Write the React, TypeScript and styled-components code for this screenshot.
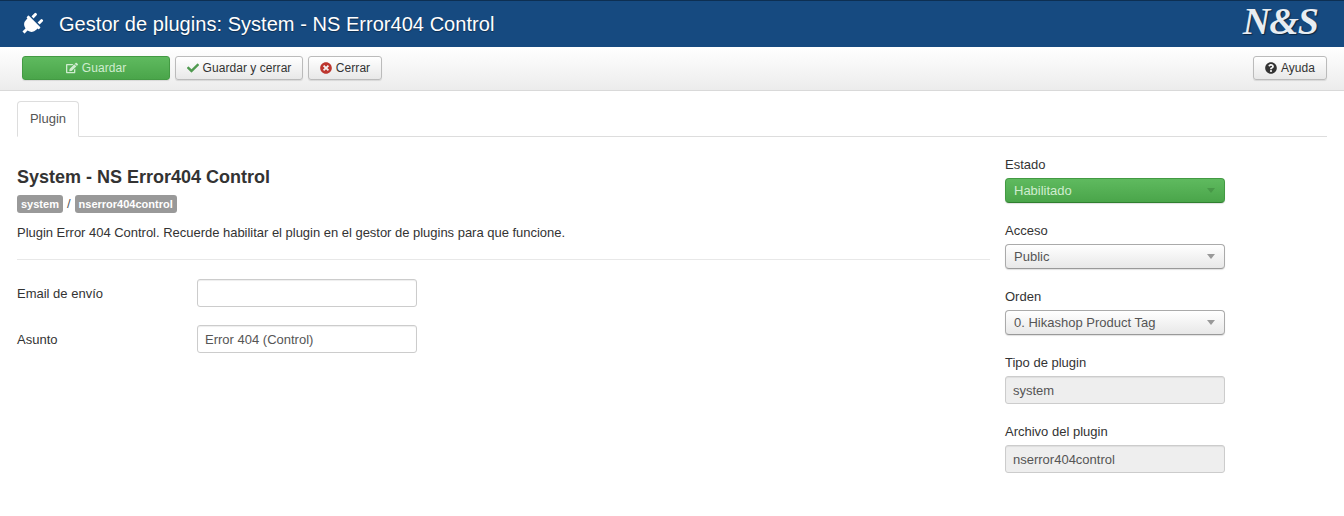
import { createGlobalStyle } from "styled-components";
import styled from "styled-components";
import { FaCheck, FaEdit, FaPlug, FaQuestionCircle, FaTimesCircle } from "react-icons/fa";

const GlobalStyle = createGlobalStyle`
  html, body {
    margin: 0;
    padding: 0;
    background: #fff;
    color: #333;
    font-family: "Liberation Sans", Arial, sans-serif;
    font-size: 13px;
    line-height: 18px;
  }
  * {
    box-sizing: border-box;
  }
`;

const Header = styled.header`
  height: 47px;
  display: flex;
  align-items: center;
  justify-content: space-between;
  padding: 0 26px 0 20px;
  background: #164a80;
  border-top: 1px solid #0d2f52;
`;

const HeaderTitle = styled.h1`
  display: flex;
  align-items: center;
  gap: 16px;
  margin: 0;
  color: #fff;
  font-size: 20px;
  font-weight: 400;
  line-height: 24px;
  letter-spacing: 0.04px;
  text-shadow: 0 1px 1px rgba(0, 0, 0, 0.4);

  svg {
    width: 23px;
    height: 23px;
    transform: rotate(45deg);
  }
`;

const Logo = styled.div`
  margin-bottom: 7px;
  color: #e8edf2;
  font-family: "Liberation Serif", "Times New Roman", serif;
  font-size: 38px;
  font-style: italic;
  font-weight: 700;
  line-height: 38px;
  letter-spacing: -1px;
  text-shadow: 1px 1px 1px rgba(0, 0, 0, 0.5);
`;

const Toolbar = styled.div`
  height: 44px;
  display: flex;
  align-items: center;
  gap: 5px;
  padding: 0 17px 2px 22px;
  background: linear-gradient(#fff, #ececec);
  border-bottom: 1px solid #d9d9d9;
`;

const Button = styled.button<{ $primary?: boolean; $push?: boolean; $width: number }>`
  width: ${(p) => p.$width}px;
  height: 24px;
  display: flex;
  align-items: center;
  justify-content: center;
  gap: 4px;
  margin-left: ${(p) => (p.$push ? "auto" : "0")};
  padding: 0;
  font: inherit;
  font-size: 12px;
  letter-spacing: 0.05px;
  color: ${(p) => (p.$primary ? "#cfeccf" : "#333")};
  background: ${(p) =>
    p.$primary
      ? "linear-gradient(#5fba5f, #4aa54a)"
      : "linear-gradient(#fff, #e8e8e8)"};
  border: 1px solid ${(p) => (p.$primary ? "#439a43" : "#bbb")};
  border-radius: 3px;
  box-shadow: 0 1px 1px rgba(0, 0, 0, 0.1);

  svg {
    width: 12px;
    height: 12px;
  }
`;

const Page = styled.main`
  padding: 10px 17px 0;
`;

const Tabs = styled.div`
  height: 36px;
  border-bottom: 1px solid #ddd;
`;

const Tab = styled.div`
  width: 62px;
  height: 36px;
  display: flex;
  align-items: center;
  justify-content: center;
  color: #555;
  background: #fff;
  border: 1px solid #ddd;
  border-bottom-color: #fff;
  border-radius: 4px 4px 0 0;
`;

const Columns = styled.div`
  display: grid;
  grid-template-columns: 973px 220px;
  column-gap: 15px;
  padding-top: 19px;
`;

const PluginName = styled.h2`
  margin: 10px 0 7px;
  color: #333;
  font-size: 18px;
  font-weight: 700;
  line-height: 22px;
`;

const Path = styled.div`
  display: flex;
  align-items: center;
  gap: 4px;
  height: 18px;
  color: #555;
`;

const Badge = styled.span`
  height: 18px;
  padding: 0 4px;
  color: #fff;
  background: #999;
  border-radius: 3px;
  font-size: 11px;
  font-weight: 700;
  line-height: 18px;
`;

const Description = styled.p`
  margin: 11px 0 17px;
  letter-spacing: -0.02px;
`;

const Divider = styled.hr`
  height: 1px;
  margin: 0 0 19px;
  background: #e8e8e8;
  border: 0;
`;

const FormRow = styled.div`
  display: flex;
  align-items: center;
  height: 28px;
  margin-bottom: 18px;
`;

const RowLabel = styled.label`
  width: 180px;
  padding-top: 2px;
`;

const Input = styled.input`
  width: 220px;
  height: 28px;
  padding: 0 7px;
  font: inherit;
  color: #555;
  background: ${(p) => (p.disabled ? "#eee" : "#fff")};
  border: 1px solid #ccc;
  border-radius: 3px;
  box-shadow: inset 0 1px 1px rgba(0, 0, 0, 0.07);
`;

const Side = styled.aside`
  display: flex;
  flex-direction: column;
`;

const Field = styled.div<{ $gap: number }>`
  display: flex;
  flex-direction: column;
  gap: 4px;
  margin-bottom: ${(p) => p.$gap}px;
`;

const Select = styled.div<{ $success?: boolean }>`
  height: 25px;
  display: flex;
  align-items: center;
  justify-content: space-between;
  padding: 0 9px 0 8px;
  color: ${(p) => (p.$success ? "#cfeccf" : "#555")};
  background: ${(p) =>
    p.$success
      ? "linear-gradient(#5fba5f, #4aa54a)"
      : "linear-gradient(#fff, #e8e8e8)"};
  border: 1px solid ${(p) => (p.$success ? "#439a43" : "#aaa")};
  border-bottom-color: ${(p) => (p.$success ? "#2f7f2f" : "#999")};
  border-radius: 4px;
  box-shadow: 0 1px 1px rgba(0, 0, 0, 0.12);
`;

const Caret = styled.span<{ $success?: boolean }>`
  width: 0;
  height: 0;
  border-left: 4px solid transparent;
  border-right: 4px solid transparent;
  border-top: 5px solid ${(p) => (p.$success ? "#489848" : "#999")};
`;

const selects = [
  { label: "Estado", value: "Habilitado", success: true },
  { label: "Acceso", value: "Public" },
  { label: "Orden", value: "0. Hikashop Product Tag" },
];

const App = () => {
  return (
    <>
      <GlobalStyle />
      <Header>
        <HeaderTitle>
          <FaPlug />
          Gestor de plugins: System - NS Error404 Control
        </HeaderTitle>
        <Logo>N&amp;S</Logo>
      </Header>
      <Toolbar>
        <Button $primary $width={148}>
          <FaEdit />
          Guardar
        </Button>
        <Button $width={128}>
          <FaCheck color="#4f9a4f" />
          Guardar y cerrar
        </Button>
        <Button $width={74}>
          <FaTimesCircle color="#bd362f" />
          Cerrar
        </Button>
        <Button $push $width={74}>
          <FaQuestionCircle />
          Ayuda
        </Button>
      </Toolbar>
      <Page>
        <Tabs>
          <Tab>Plugin</Tab>
        </Tabs>
        <Columns>
          <section>
            <PluginName>System - NS Error404 Control</PluginName>
            <Path>
              <Badge>system</Badge>/<Badge>nserror404control</Badge>
            </Path>
            <Description>
              Plugin Error 404 Control. Recuerde habilitar el plugin en el gestor de plugins para que funcione.
            </Description>
            <Divider />
            <FormRow>
              <RowLabel>Email de envío</RowLabel>
              <Input readOnly value="" />
            </FormRow>
            <FormRow>
              <RowLabel>Asunto</RowLabel>
              <Input readOnly value="Error 404 (Control)" />
            </FormRow>
          </section>
          <Side>
            {selects.map((s) => (
              <Field key={s.label} $gap={19}>
                <span>{s.label}</span>
                <Select $success={s.success}>
                  {s.value}
                  <Caret $success={s.success} />
                </Select>
              </Field>
            ))}
            <Field $gap={19}>
              <span>Tipo de plugin</span>
              <Input disabled value="system" />
            </Field>
            <Field $gap={0}>
              <span>Archivo del plugin</span>
              <Input disabled value="nserror404control" />
            </Field>
          </Side>
        </Columns>
      </Page>
    </>
  );
};

export default App;
